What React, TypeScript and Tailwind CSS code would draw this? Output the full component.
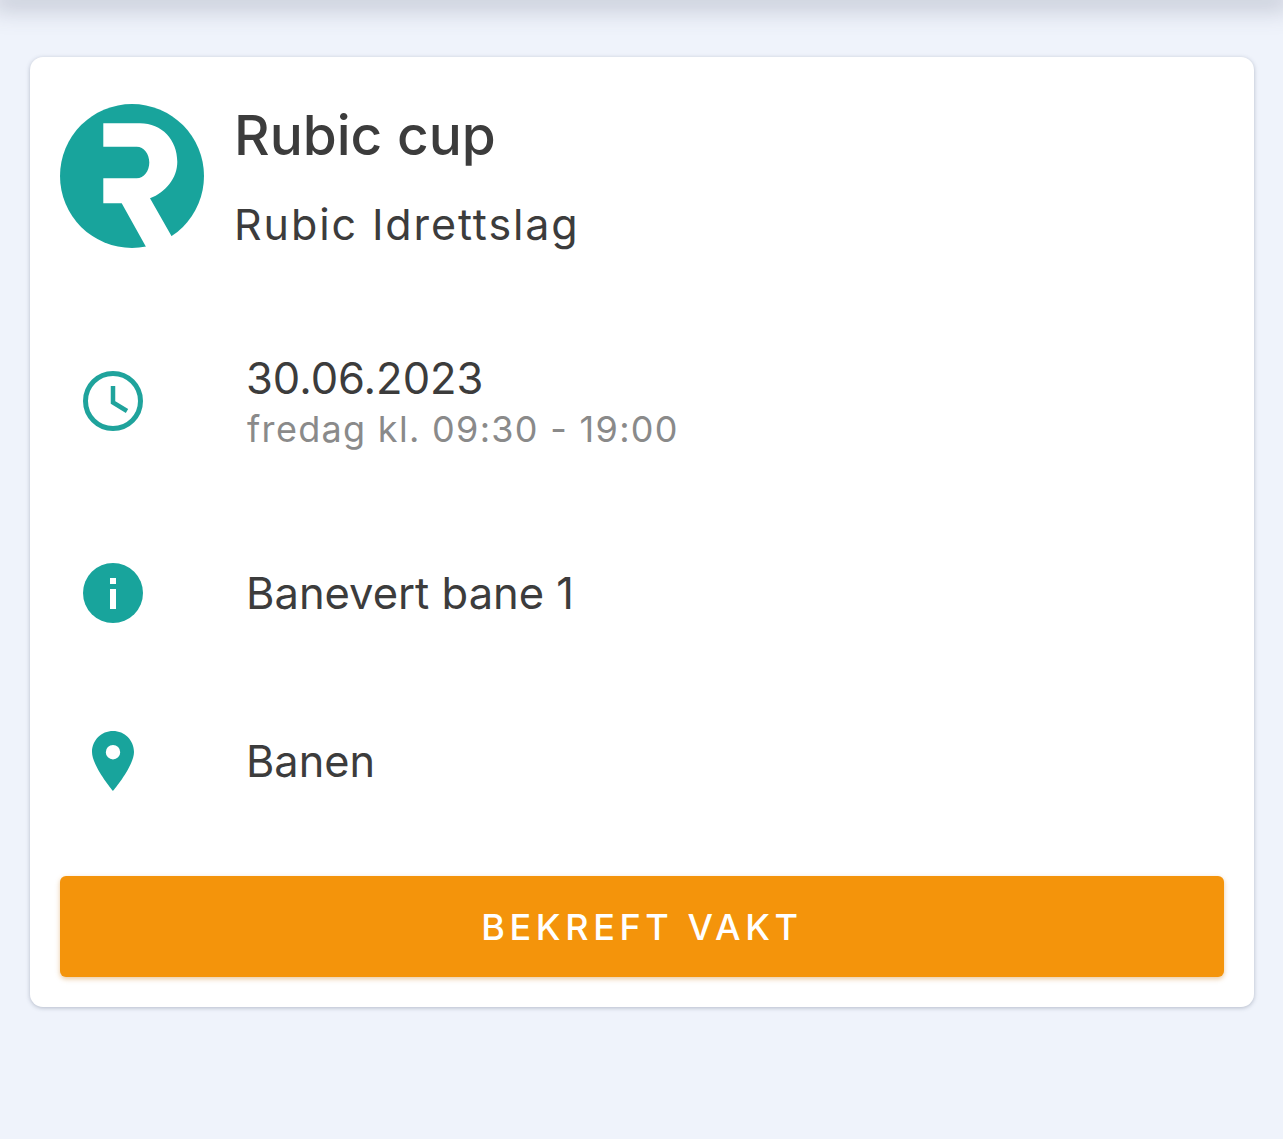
import { ReactNode } from 'react';

function RubicLogo() {
  return (
    <svg width="144" height="144" viewBox="0 0 144 144" className="shrink-0">
      <circle cx="72" cy="72" r="72" fill="#18a49c" />
      <path
        fill="#fff"
        d="M43.3 19.3H80C102 19.3 117.3 36 117.3 57.7C117.3 74 106 88 90 94.3L120 147L90 150L61.7 99.3H43.3V74.3H76.7C84 74.3 89.3 67 89.3 58.5C89.3 50 84 42.7 76.7 42.7H43.3Z"
      />
    </svg>
  );
}

function ClockIcon() {
  return (
    <svg width="60" height="60" viewBox="0 0 60 60" fill="none" stroke="#1fa39c" strokeWidth="5">
      <circle cx="30" cy="30" r="27.5" />
      <path d="M30 15V31.5L44 40" strokeWidth="4.5" />
    </svg>
  );
}

function InfoIcon() {
  return (
    <svg width="60" height="60" viewBox="0 0 60 60">
      <circle cx="30" cy="30" r="30" fill="#18a49c" />
      <rect x="27" y="15" width="6" height="6" fill="#fff" />
      <rect x="27" y="26" width="6" height="20" fill="#fff" />
    </svg>
  );
}

function PinIcon() {
  return (
    <svg width="42" height="60" viewBox="0 0 42 60">
      <path
        fill="#18a49c"
        fillRule="evenodd"
        d="M21 0C9.4 0 0 9.2 0 21C0 35 21 60 21 60C21 60 42 35 42 21C42 9.2 32.6 0 21 0ZM21 14A7.2 7.2 0 1 1 21 28.4A7.2 7.2 0 1 1 21 14Z"
      />
    </svg>
  );
}

function InfoRow({ icon, className, children }: { icon: ReactNode; className: string; children: ReactNode }) {
  return (
    <div className={`flex items-center ${className}`}>
      <div className="flex w-[106px] shrink-0 justify-center mr-[81px]">{icon}</div>
      <div className="min-w-0">{children}</div>
    </div>
  );
}

export default function App() {
  return (
    <div className="min-h-[1139px] bg-[#eff3fb] font-['Inter',sans-serif] text-[#3c3c3c]">
      <div className="h-0 shadow-[0_0_24px_8px_rgba(80,84,110,0.34)]" />
      <div className="pl-[30px] pr-[29px] pt-[57px]">
        <div className="rounded-[13px] bg-white pl-[30px] pr-[30px] pt-[47px] pb-[30px] shadow-[0_1px_4px_rgba(70,80,110,0.35)]">
          <div className="flex gap-[30px]">
            <RubicLogo />
            <div>
              <h1 className="-mt-[2px] text-[55px] leading-[66px] font-medium">Rubic cup</h1>
              <p className="mt-[31px] text-[43px] leading-[50px] tracking-[1.9px]">Rubic Idrettslag</p>
            </div>
          </div>

          <InfoRow icon={<ClockIcon />} className="mt-[103px] h-[98px]">
            <p className="-ml-px text-[43.5px] leading-[52px]">30.06.2023</p>
            <p className="mt-[3px] text-[36px] leading-[44px] tracking-[1.3px] text-[#8a8a8a]">fredag kl. 09:30 - 19:00</p>
          </InfoRow>
          <InfoRow icon={<InfoIcon />} className="mt-[103px] h-[80px]">
            <p className="-ml-px text-[43.5px] leading-[52px]">Banevert bane 1</p>
          </InfoRow>
          <InfoRow icon={<PinIcon />} className="mt-[88px] h-[80px]">
            <p className="-ml-px text-[43.3px] leading-[52px]">Banen</p>
          </InfoRow>

          <button className="mt-[75px] flex h-[101px] w-full items-center justify-center rounded-[6px] bg-[#f4940b] text-[36px] font-medium tracking-[4.6px] text-white shadow-[0_2px_5px_rgba(200,120,20,0.4)]">
            BEKREFT VAKT
          </button>
        </div>
      </div>
    </div>
  );
}
